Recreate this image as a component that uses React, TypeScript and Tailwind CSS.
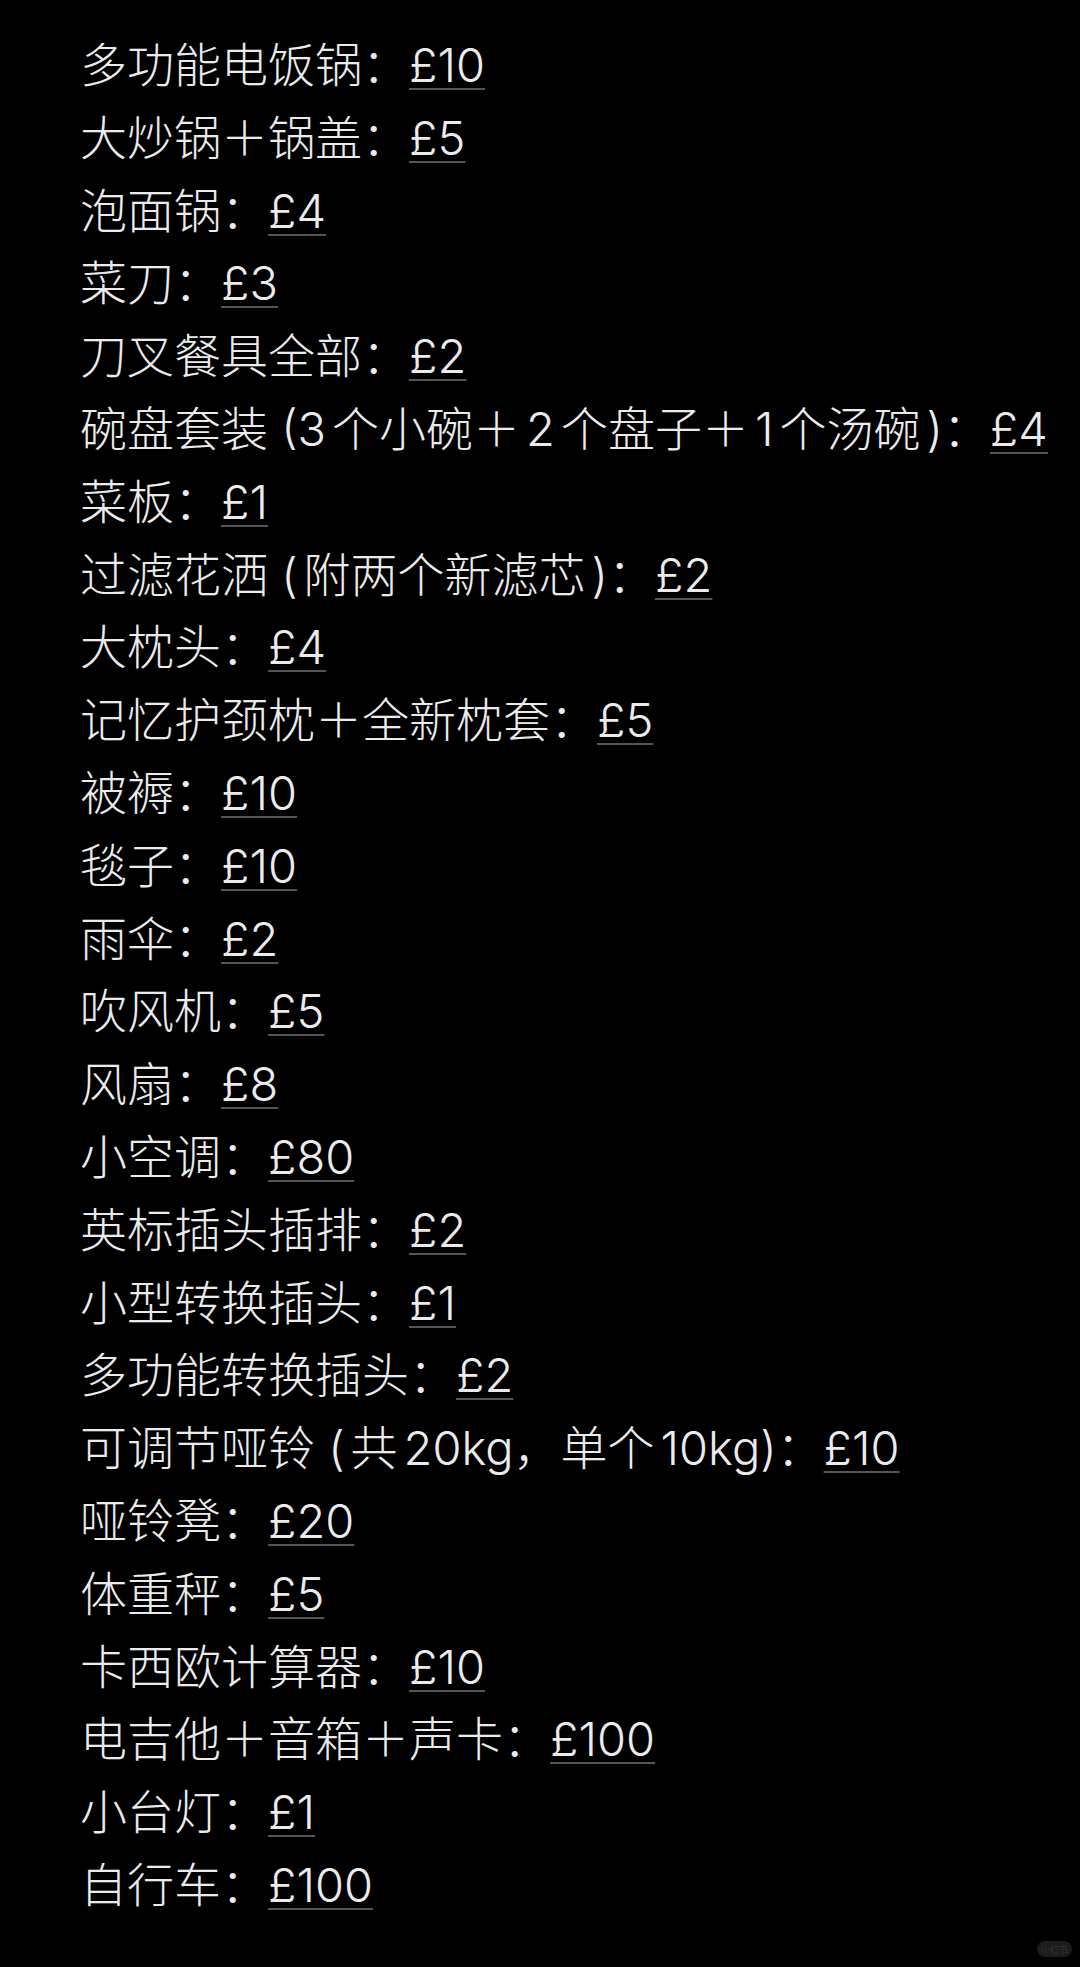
import type { ReactNode } from 'react'

const items: [string, string][] = [
  ['多功能电饭锅：', '£10'],
  ['大炒锅＋锅盖：', '£5'],
  ['泡面锅：', '£4'],
  ['菜刀：', '£3'],
  ['刀叉餐具全部：', '£2'],
  ['碗盘套装 (3个小碗＋2个盘子＋1个汤碗)：', '£4'],
  ['菜板：', '£1'],
  ['过滤花洒 (附两个新滤芯)：', '£2'],
  ['大枕头：', '£4'],
  ['记忆护颈枕＋全新枕套：', '£5'],
  ['被褥：', '£10'],
  ['毯子：', '£10'],
  ['雨伞：', '£2'],
  ['吹风机：', '£5'],
  ['风扇：', '£8'],
  ['小空调：', '£80'],
  ['英标插头插排：', '£2'],
  ['小型转换插头：', '£1'],
  ['多功能转换插头：', '£2'],
  ['可调节哑铃 (共20kg，单个10kg)：', '£10'],
  ['哑铃凳：', '£20'],
  ['体重秤：', '£5'],
  ['卡西欧计算器：', '£10'],
  ['电吉他＋音箱＋声卡：', '£100'],
  ['小台灯：', '£1'],
  ['自行车：', '£100'],
]

// CJK ideographs (and the full-width plus) get a small gap next to latin runs
const isHan = (c?: string) => !!c && /[\u4e00-\u9fff＋]/.test(c)
const isLatin = (c: string) => /[A-Za-z0-9()]/.test(c)

function spaced(text: string): ReactNode[] {
  const out: ReactNode[] = []
  let i = 0
  while (i < text.length) {
    if (!isLatin(text[i])) {
      let j = i
      while (j < text.length && !isLatin(text[j])) j++
      out.push(text.slice(i, j))
      i = j
      continue
    }
    let j = i
    while (j < text.length && isLatin(text[j])) j++
    const left = isHan(text[i - 1])
    const right = isHan(text[j])
    const cls = left && right ? 'mx-[6px]' : left ? 'ml-[6px]' : right ? 'mr-[6px]' : ''
    out.push(
      <span key={i} className={cls}>
        {text.slice(i, j)}
      </span>,
    )
    i = j
  }
  return out
}

export default function App() {
  return (
    <div
      className="relative min-h-[1967px] w-[1080px] bg-black pt-[29px] pl-[80px] font-light text-[#ebebeb]"
      style={{ fontFamily: 'Inter, "Noto Sans CJK SC", sans-serif' }}
    >
      <ul className="flex flex-col">
        {items.map(([label, price]) => (
          <li key={label} className="whitespace-pre text-[47px] leading-[72.8px]">
            {spaced(label)}
            <span className="underline decoration-[#555] decoration-2 underline-offset-[6px]">{price}</span>
          </li>
        ))}
      </ul>

      {/* watermark */}
      <div className="absolute right-[8px] bottom-[10px] flex h-[16px] items-center rounded-full bg-[#1c1c1c] px-[4px] text-[9px] leading-none text-[#3a3a3a]">
        小红书
      </div>
    </div>
  )
}
